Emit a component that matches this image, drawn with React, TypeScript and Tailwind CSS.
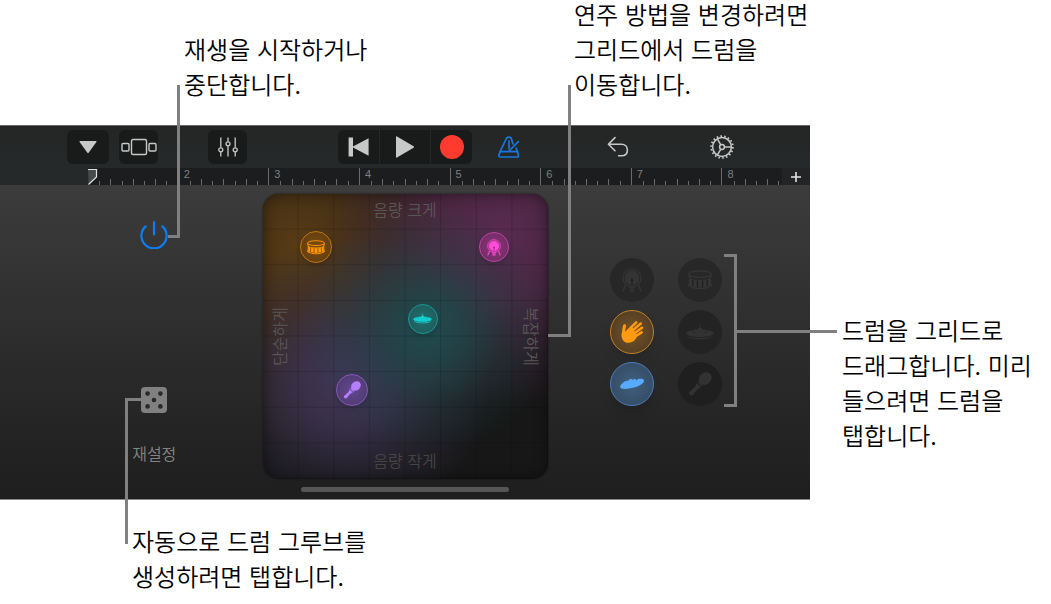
import React from 'react'
import clsx from 'clsx'

type DrumName = 'kick' | 'snare' | 'hand' | 'cymbal' | 'shaker' | 'maraca'

interface PadDrum {
    drum: DrumName
    label: string
    place: string
    look: string
    icon: string
}

interface TrayDrum {
    drum: DrumName
    label: string
    look: string
}

const padDrums: PadDrum[] = [
    { drum: 'snare', label: '스네어', place: 'col-start-2 row-start-2', look: 'size-8 border-[#c0750f] bg-[radial-gradient(#7a4c10,#5c3a10)] text-[#ff9500]', icon: 'w-[18px]' },
    { drum: 'kick', label: '킥', place: 'col-start-7 row-start-2', look: 'size-[30px] border-[#c044a4] bg-[radial-gradient(#8c3378,#6b2c60)] text-[#ff4bd8]', icon: 'w-[14px]' },
    { drum: 'cymbal', label: '심벌즈', place: 'col-start-5 row-start-4', look: 'size-[30px] border-[#1e9696] bg-[radial-gradient(#216e6e,#1f5858)] text-[#14cfcf]', icon: 'w-[19px]' },
    { drum: 'maraca', label: '마라카스', place: 'col-start-3 row-start-6', look: 'size-8 border-[#8558b8] bg-[radial-gradient(#644890,#4a3869)] text-[#b57dff]', icon: 'w-[18px]' },
]

const trayDrums: TrayDrum[] = [
    { drum: 'kick', label: '킥', look: 'border-transparent bg-[#272727] text-[#343434]' },
    { drum: 'snare', label: '스네어', look: 'border-transparent bg-[#272727] text-[#343434]' },
    { drum: 'hand', label: '박수', look: 'border-[#c5802a] bg-[radial-gradient(#76532a,#483820)] text-[#ff9a12] shadow-lg' },
    { drum: 'cymbal', label: '심벌즈', look: 'border-transparent bg-[#232323] text-[#323232]' },
    { drum: 'shaker', label: '셰이커', look: 'border-[#4a7fc0] bg-[radial-gradient(#3f5f80,#33475c)] text-[#58aaff] shadow-lg' },
    { drum: 'maraca', label: '마라카스', look: 'border-transparent bg-[#1f1f1f] text-[#323232]' },
]

const bars = [1, 2, 3, 4, 5, 6, 7, 8]

const DrumIcon = ({ drum, className }: { drum: DrumName; className: string }) => {
    switch (drum) {
        case 'kick':
            return (
                <svg viewBox="0 0 20 24" className={className} fill="none" stroke="currentColor" strokeWidth="1.2" aria-hidden="true">
                    <circle cx="10" cy="10" r="9" />
                    <circle cx="10" cy="10" r="6.8" fill="currentColor" />
                    <path d="M3.6 17 L1 23.4 M16.4 17 L19 23.4 M8.6 18 V23 H11.4 V18" strokeWidth="1.5" />
                    <path d="M10 12 V17" className="stroke-black/35" strokeWidth="1.2" />
                    <circle cx="10" cy="12" r="1.3" className="fill-black/35" stroke="none" />
                </svg>
            )
        case 'snare':
            return (
                <svg viewBox="0 0 24 20" className={className} fill="none" stroke="currentColor" strokeWidth="1.3" aria-hidden="true">
                    <ellipse cx="12" cy="4.2" rx="11.2" ry="3.2" />
                    <path d="M1.8 8.4 Q12 11.8 22.2 8.4 V15.4 Q12 19.2 1.8 15.4 Z" fill="currentColor" stroke="none" />
                    <path d="M0.8 4.4 V6.6 M23.2 4.4 V6.6 M1.6 6 V16 M22.4 6 V16 M0.8 14 V15.8 Q12 21.2 23.2 15.8 V14" />
                    <path d="M4.8 9.8 V16 M9.4 10.6 V17 M14.6 10.6 V17 M19.2 9.8 V16" className="stroke-black/40" strokeWidth="1.3" />
                </svg>
            )
        case 'cymbal':
            return (
                <svg viewBox="0 0 28 16" className={className} fill="currentColor" aria-hidden="true">
                    <path d="M13.6 0.4 H14.4 V4 H13.6 Z" />
                    <path d="M14 3.6 C15.2 3.6 15.8 4.2 16.4 5.4 C22 5.6 27.6 7 27.6 9.2 C27.6 11.4 21.4 13 14 13 C6.6 13 0.4 11.4 0.4 9.2 C0.4 7 6 5.6 11.6 5.4 C12.2 4.2 12.8 3.6 14 3.6 Z" />
                    <path d="M0.8 11.4 C3.6 16.6 24.4 16.6 27.2 11.4 C23 15 5 15 0.8 11.4 Z" />
                    <path d="M6 6.6 L9 8.8 M22 6.6 L19 8.8" fill="none" className="stroke-black/30" strokeWidth="0.8" />
                </svg>
            )
        case 'maraca':
            return (
                <svg viewBox="0 0 24 24" className={className} fill="currentColor" aria-hidden="true">
                    <ellipse cx="17.2" cy="6.6" rx="7" ry="5.8" transform="rotate(-42 17.2 6.6)" />
                    <path d="M10.2 9.4 L14.8 14 L13.8 14.8 L9.4 10.4 Z" />
                    <path d="M8.8 11.2 L13 15.4 C10 16.2 8.4 18.4 5.4 22.4 C4.6 23.6 3 23.8 2 22.8 C0.8 21.8 0.8 20.2 2 19.2 C5.4 16.6 8 14.6 8.8 11.2 Z" />
                </svg>
            )
        case 'hand':
            return (
                <svg viewBox="0 0 24 24" className={className} fill="none" stroke="currentColor" strokeLinecap="round" aria-hidden="true">
                    <path d="M1.6 13.4 C1.2 17.4 2.6 22.8 8.6 22.8 C13.4 22.8 15.6 19.4 17 16.6 L12.6 7.6 L6.6 10.8 L4.2 12 Z" fill="currentColor" stroke="none" />
                    <path d="M3.2 14.4 C3.8 11.4 3.6 9 4.6 5.8" strokeWidth="3" />
                    <path d="M7.2 11.4 L16.2 2.4 M10 12.8 L20.8 3.6" strokeWidth="2.6" />
                    <path d="M12 15 L22 7.8 M13.6 17.4 L21.6 12.4" strokeWidth="2.6" />
                </svg>
            )
        default:
            return (
                <svg viewBox="0 0 24 12" className={className} fill="currentColor" aria-hidden="true">
                    <path d="M0.2 9.6 C-0.4 6.8 4 3.8 7 2.6 L8 3.6 L8.6 1.8 C9.6 1.2 11 0.9 12 1 L13 2.6 L13.8 0.8 C15 0.8 16 1.4 16.6 2.6 L17.6 1.2 C20.4 0.4 24 0.6 24 2.8 C24 5.4 19.4 8.2 14 9.6 C8 11.2 0.8 11.6 0.2 9.6 Z" />
                </svg>
            )
    }
}

const Toolbar = () => {
    return (
        <div className="grid h-[43px] grid-cols-[1fr_auto_1fr] items-center border-t border-[#656867] bg-linear-to-b from-[#242625] to-[#26292a] text-[#c8c8c8]">
            <div className="flex pl-[67px] pr-[91px]">
                <button aria-label="보기" className="flex h-[34px] w-[42px] items-center justify-center rounded-md bg-[#191b1b]">
                    <svg viewBox="0 0 18 12" className="w-[18px]" fill="currentColor"><path d="M1 0 H17 Q18 0 17.4 1 L9.8 11.4 Q9 12.4 8.2 11.4 L0.6 1 Q0 0 1 0 Z" /></svg>
                </button>
                <button aria-label="트랙" className="ml-[10px] flex h-[34px] w-[39px] items-center justify-center rounded-md bg-[#191b1b]">
                    <svg viewBox="0 0 36 18" className="w-9" fill="none" stroke="currentColor" strokeWidth="1.4">
                        <rect x="10.5" y="1.5" width="15" height="15" rx="1.5" />
                        <rect x="1" y="5.5" width="7" height="7.5" rx="1" />
                        <rect x="28" y="5.5" width="7" height="7.5" rx="1" />
                    </svg>
                </button>
                <button aria-label="믹서" className="ml-auto flex h-[34px] w-[39px] items-center justify-center rounded-md bg-[#191b1b]">
                    <svg viewBox="0 0 20 20" className="w-5" fill="none" stroke="currentColor" strokeWidth="1.3">
                        <path d="M2.8 0.5 V10.5 M2.8 15 V19.5 M10 0.5 V4.5 M10 9 V19.5 M17.2 0.5 V10.5 M17.2 15 V19.5" />
                        <circle cx="2.8" cy="12.8" r="2" />
                        <circle cx="10" cy="6.8" r="2" />
                        <circle cx="17.2" cy="12.8" r="2" />
                    </svg>
                </button>
            </div>
            <div className="flex h-[34px] gap-px overflow-hidden rounded-md bg-[#252827]">
                <button aria-label="처음으로" className="flex w-[41px] items-center justify-center bg-[#191b1b]">
                    <svg viewBox="0 0 22 20" className="w-[22px]" fill="currentColor"><path d="M0.6 0.5 H5 V9.4 L20.6 1.2 V18.8 L5 10.6 V19.5 H0.6 Z" /></svg>
                </button>
                <button aria-label="재생" className="flex w-[50px] items-center justify-center bg-[#191b1b]">
                    <svg viewBox="0 0 20 22" className="w-5" fill="currentColor"><path d="M1 1 Q1 0 2 0.5 L18.6 10.2 Q19.6 11 18.6 11.8 L2 21.5 Q1 22 1 21 Z" /></svg>
                </button>
                <button aria-label="녹음" className="flex w-[41px] items-center justify-center bg-[#191b1b]">
                    <span className="size-6 rounded-full bg-[#ff3b30]" />
                </button>
            </div>
            <div className="flex items-center pl-[25px]">
                <button aria-label="메트로놈" className="text-[#1976dc]">
                    <svg viewBox="0 0 24 24" className="size-6" fill="none" stroke="currentColor" strokeWidth="1.7" strokeLinejoin="round" strokeLinecap="round">
                        <path d="M9.6 3 Q12 1.2 14.2 3 L16 9 M9.6 3 L3.2 16.4 L1.8 20.4 Q1.8 22 3 22 H20 Q22 22 21.4 20 L19.2 13" />
                        <path d="M3.4 16.6 H20.4 M12 5.8 V13.4 M12 16 L21.4 6.6" />
                    </svg>
                </button>
                <button aria-label="실행 취소" className="ml-[85px]">
                    <svg viewBox="0 0 24 24" className="size-6" fill="none" stroke="currentColor" strokeWidth="1.6" strokeLinecap="round" strokeLinejoin="round">
                        <path d="M9 2.6 L2.4 9.2 L9 15.8 M2.4 9.2 H15.4 C19 9.2 21.4 11.6 21.4 15 C21.4 18.6 19 20.8 15.4 20.8 H12.6" />
                    </svg>
                </button>
                <button aria-label="설정" className="ml-[79px]">
                    <svg viewBox="0 0 26 26" className="size-[26px]" fill="none" stroke="currentColor" strokeWidth="1.5">
                        <circle cx="13" cy="13" r="9.4" strokeWidth="1.5" />
                        <circle cx="13" cy="13" r="10.9" strokeWidth="1.8" strokeDasharray="1.6 2.2" />
                        <circle cx="13" cy="13" r="2.4" />
                        <path d="M15.4 13 H22.6 M11.8 10.9 L8.2 4.7 M11.8 15.1 L8.2 21.3" />
                    </svg>
                </button>
            </div>
        </div>
    )
}

const Ruler = () => {
    return (
        <div className="flex h-[17px] bg-[#26292a] pl-[88px] font-['Liberation_Sans',sans-serif] font-normal">
            <div className="relative flex flex-1 overflow-hidden bg-[#1b1d1e]">
                <div className="flex w-[724px] shrink-0">
                    {bars.map((bar) => (
                        <div key={bar} className={clsx('flex flex-1 flex-col justify-between', bar > 1 && 'border-l border-[#6a6c6c]')}>
                            <span className="h-[11px] pl-[5px] text-[11px] leading-3 text-[#7d8080]">{bar > 1 && bar}</span>
                            <div className="grid grid-cols-8 items-end">
                                {bars.map((tick) => (
                                    <i key={tick} className={clsx('border-l', tick === 1 ? 'border-transparent' : 'border-[#6a6c6c]', tick % 2 ? 'h-[6px]' : 'h-1')} />
                                ))}
                            </div>
                        </div>
                    ))}
                </div>
                <svg viewBox="0 0 10 17" className="absolute left-0 top-0 h-[17px] w-[10px]">
                    <path d="M0 1.5 H8.5 V9 L0.5 16.5 Z" fill="#48494a" />
                    <path d="M0 1.5 H8.5 V9 L0.5 16.5" fill="none" stroke="#e2e2e2" strokeWidth="1.2" />
                </svg>
            </div>
            <button aria-label="섹션 추가" className="flex w-7 items-center justify-center bg-[#222425] text-[#e4e4e4]">
                <svg viewBox="0 0 10 10" className="w-[10px]" stroke="currentColor" strokeWidth="1.6"><path d="M5 0 V10 M0 5 H10" /></svg>
            </button>
        </div>
    )
}

const DrumPad = () => {
    return (
        <div className="relative size-[285px]">
            <div className="relative size-full overflow-hidden rounded-2xl bg-[#171717] text-base leading-5 text-[#5a5656] shadow-[0_0_2px_#111]">
                <div className="absolute inset-0 bg-[radial-gradient(circle_125px_at_58%_47%,#1f4c4e,#1f494bcc_25%,#1f474950_62%,transparent),radial-gradient(circle_145px_at_29%_66%,#413659,#3e3454cc_30%,#37304a60_65%,transparent),radial-gradient(circle_175px_at_84%_14%,#5a2b50,#54294acc_38%,#45264066_70%,transparent),radial-gradient(circle_210px_at_12%_18%,#573b15,#4d3416cc_35%,#3f301c77_65%,transparent)]" />
                <div className="absolute inset-0 bg-[linear-gradient(to_right,#00000028_1px,transparent_1px),linear-gradient(to_bottom,#00000028_1px,transparent_1px)] bg-[size:12.5%_12.5%] bg-[position:-1px_-1px]" />
                <div className="absolute inset-0 rounded-2xl shadow-[inset_0_0_14px_#00000070]" />
                <span className="absolute inset-x-0 top-[5px] text-center">음량 크게</span>
                <span className="absolute inset-x-0 bottom-[9px] text-center text-[#454444]">음량 작게</span>
                <div className="absolute inset-y-0 left-[6px] flex items-center">
                    <span className="rotate-180 [text-orientation:sideways] [writing-mode:vertical-rl]">단순하게</span>
                </div>
                <div className="absolute inset-y-0 right-[6px] flex items-center">
                    <span className="[text-orientation:sideways] [writing-mode:vertical-rl]">복잡하게</span>
                </div>
                <div className="relative grid size-full grid-cols-8 grid-rows-8 place-items-center">
                    {padDrums.map(({ drum, label, place, look, icon }) => (
                        <button key={drum} aria-label={label} className={clsx('flex items-center justify-center rounded-full border shadow-md', place, look)}>
                            <DrumIcon drum={drum} className={icon} />
                        </button>
                    ))}
                </div>
            </div>
            <div className="absolute -top-[109px] left-full h-[252px] w-[23px] border-b-3 border-r-3 border-[#808080]" />
        </div>
    )
}

const Controls = () => {
    return (
        <div className="flex flex-col items-center pl-[46px] pt-[36px] text-[#858585]">
            <div className="relative size-7">
                <button aria-label="재생 시작 또는 중단" className="block text-[#0a7ff5]">
                    <svg viewBox="0 0 28 28" className="size-7" fill="none" stroke="currentColor" strokeWidth="2.2" strokeLinecap="round">
                        <path d="M14 1.2 V13.4 M5.6 5.4 A12.6 12.6 0 1 0 22.4 5.4" />
                    </svg>
                </button>
                <div className="absolute -top-[136px] left-full h-[153px] w-3 border-b-3 border-r-3 border-[#808080]" />
            </div>
            <div className="relative mt-[138px]">
                <button className="flex flex-col items-center">
                    <svg viewBox="0 0 26 26" className="size-[26px]">
                        <rect width="26" height="26" rx="4" fill="#808080" />
                        <g fill="#282828">
                            <circle cx="6.6" cy="6.6" r="2.3" />
                            <circle cx="19.4" cy="6.6" r="2.3" />
                            <circle cx="13" cy="13" r="2.3" />
                            <circle cx="6.6" cy="19.4" r="2.3" />
                            <circle cx="19.4" cy="19.4" r="2.3" />
                        </g>
                    </svg>
                    <span className="mt-7 text-base leading-6">재설정</span>
                </button>
                <div className="absolute -left-[7px] top-[11px] h-[146px] w-4 border-l-3 border-t-3 border-[#808080]" />
            </div>
        </div>
    )
}

const DrumTray = () => {
    return (
        <div className="pl-[62px] pt-[73px]">
            <div className="relative grid w-28 grid-cols-2 justify-between gap-x-6 gap-y-2">
                {trayDrums.map(({ drum, label, look }) => (
                    <button key={drum} aria-label={label} className={clsx('flex size-11 items-center justify-center rounded-full border', look)}>
                        <DrumIcon drum={drum} className={drum === 'cymbal' ? 'w-7' : drum === 'kick' ? 'w-5' : 'w-6'} />
                    </button>
                ))}
                <div className="absolute -top-1 left-full ml-[2px] h-[153px] w-[13px] border-y-3 border-r-3 border-[#808080]" />
                <div className="absolute left-full top-[72px] ml-[15px] h-[3px] w-[100px] bg-[#808080]" />
            </div>
        </div>
    )
}

const App = () => {
    return (
        <main lang="ko" className="min-h-screen bg-white font-['Noto_Sans_CJK_KR',sans-serif] text-2xl leading-[35px] font-[350] text-black">
            <div className="flex h-[125px] items-end pb-6 pl-[184px]">
                <p className="w-[390px]">재생을 시작하거나<br />중단합니다.</p>
                <p>연주 방법을 변경하려면<br />그리드에서 드럼을<br />이동합니다.</p>
            </div>
            <div className="flex">
                <section className="min-w-0 flex-1 border-b border-[#8a8a8a]">
                    <Toolbar />
                    <Ruler />
                    <div className="bg-linear-to-b from-[#3c3c3c] to-[#1e1e1e] pb-[7px]">
                        <div className="grid grid-cols-[1fr_auto_1fr]">
                            <Controls />
                            <div className="pt-[9px]">
                                <DrumPad />
                                <div className="mx-auto mt-2 h-[5px] w-[208px] rounded-full bg-[#565656]" />
                            </div>
                            <DrumTray />
                        </div>
                    </div>
                </section>
                <p className="w-[241px] pl-8 pt-[187px]">드럼을 그리드로<br />드래그합니다. 미리<br />들으려면 드럼을<br />탭합니다.</p>
            </div>
            <p className="pl-[132px] pt-[23px]">자동으로 드럼 그루브를<br />생성하려면 탭합니다.</p>
        </main>
    )
}

export default App
